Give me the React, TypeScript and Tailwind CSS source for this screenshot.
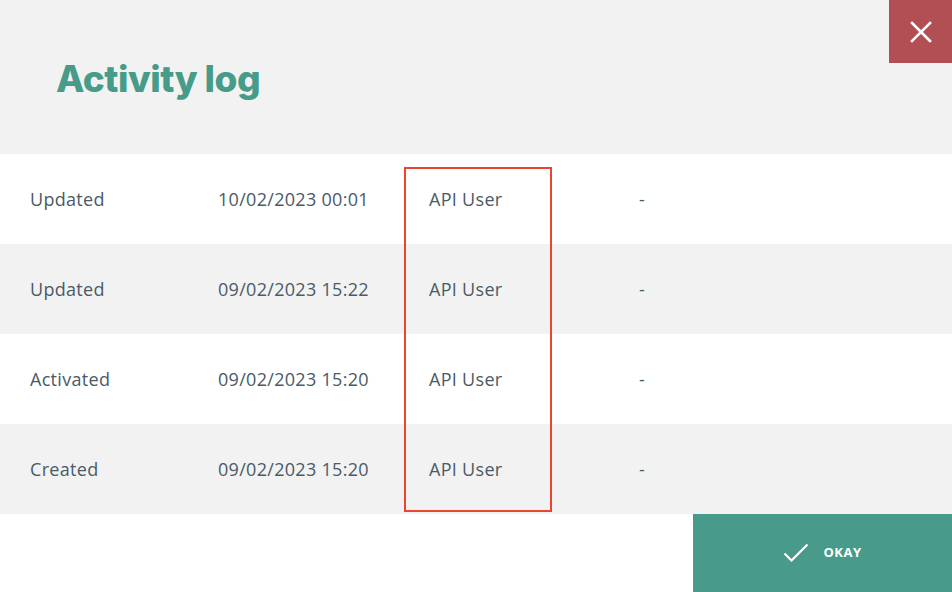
import React from "react";

const rows = [
  ["Updated", "10/02/2023 00:01", "API User", "-"],
  ["Updated", "09/02/2023 15:22", "API User", "-"],
  ["Activated", "09/02/2023 15:20", "API User", "-"],
  ["Created", "09/02/2023 15:20", "API User", "-"],
];

export default function App() {
  return (
    <div className="w-[952px] h-[592px] bg-white overflow-hidden relative" style={{ fontFamily: '"Open Sans", sans-serif' }}>
      <div className="h-[154px] bg-[#f2f2f2] flex items-center pl-[56px] pt-[4px]">
        <h1 className="text-[37px] font-extrabold text-[#479b89] tracking-[-0.5px]" style={{ fontFamily: 'Inter, sans-serif' }}>
          Activity log
        </h1>
      </div>
      <button className="absolute top-0 right-0 w-[63px] h-[63px] bg-[#b24f55] flex items-center justify-center">
        <svg width="22" height="22" viewBox="0 0 22 22" fill="none" stroke="white" strokeWidth="2.6" strokeLinecap="square">
          <path d="M2 2L20 20M20 2L2 20" />
        </svg>
      </button>
      <div className="relative">
        {rows.map((r, i) => (
          <div key={i} className={`h-[90px] flex items-center text-[18px] tracking-[0.3px] text-[#4a5a66] ${i % 2 === 1 ? "bg-[#f2f2f2]" : "bg-white"}`}>
            <div className="w-[218px] pl-[30px]">{r[0]}</div>
            <div className="w-[211px]">{r[1]}</div>
            <div className="w-[210px]">{r[2]}</div>
            <div>{r[3]}</div>
          </div>
        ))}
        <div className="absolute left-[404px] top-[13px] w-[148px] h-[345px] border-2 border-[#e8462f]" />
      </div>
      <div className="flex justify-end">
        <button className="w-[259px] h-[78px] bg-[#489a8b] flex items-center justify-center gap-[14px] text-white text-[13px] font-bold tracking-[0.5px]">
          <svg width="26" height="20" viewBox="0 0 26 20" fill="none" stroke="white" strokeWidth="2.2">
            <path d="M1.5 10.5L8.5 17.5L24.5 1.5" />
          </svg>
          OKAY
        </button>
      </div>
    </div>
  );
}
